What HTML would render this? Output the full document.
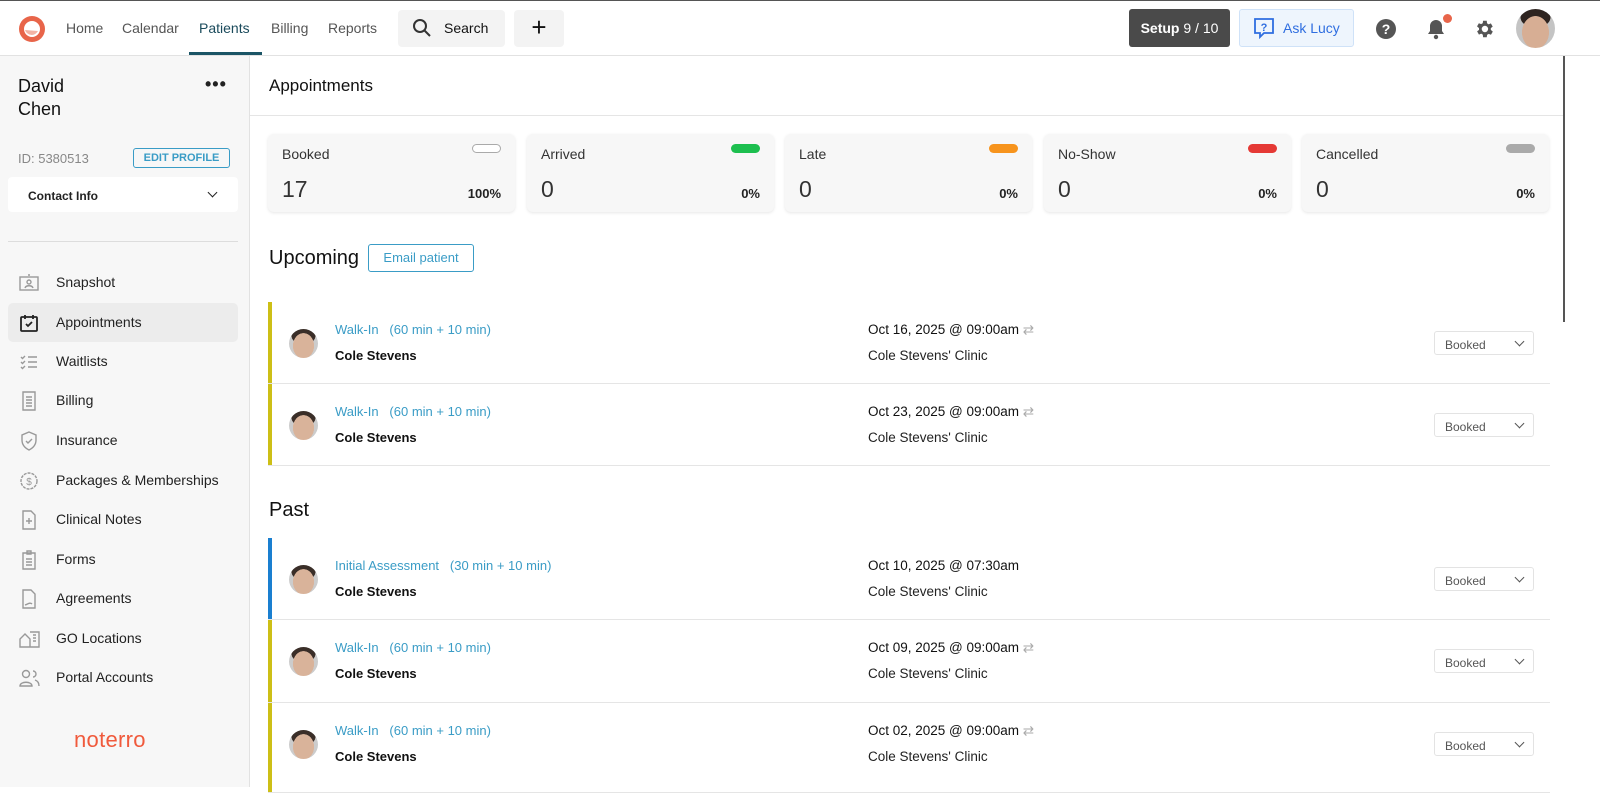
<!DOCTYPE html>
<html><head><meta charset="utf-8"><style>
*{box-sizing:border-box;margin:0;padding:0}
body{width:1600px;height:787px;overflow:hidden;font-family:"Liberation Sans",sans-serif;background:#fff;color:#222;position:relative}
.abs{position:absolute}
.top{position:absolute;left:0;top:0;width:1600px;height:56px;border-top:1px solid #555;border-bottom:1px solid #e2e2e2;background:#fff}
.nav{position:absolute;top:19px;font-size:14px;color:#555}
.side{position:absolute;left:0;top:56px;width:250px;height:731px;background:#f7f7f7;border-right:1px solid #e2e2e2}
.item{position:absolute;left:8px;width:230px;height:39px;font-size:14px;color:#222;line-height:39px;padding-left:48px;border-radius:5px}
.item svg{position:absolute;left:11px;top:10px}
.card{position:absolute;top:134px;width:247px;height:78px;background:#f7f7f7;border-radius:6px;box-shadow:0 1px 3px rgba(0,0,0,.1)}
.card .l{position:absolute;left:14px;top:12px;font-size:14px;color:#333}
.card .n{position:absolute;left:14px;top:42px;font-size:23px;color:#333}
.card .p{position:absolute;right:14px;top:52px;font-size:13px;font-weight:bold;color:#222}
.card .b{position:absolute;right:14px;top:10px;width:29px;height:9px;border-radius:5px}
.row{position:absolute;left:268px;width:1282px;border-bottom:1px solid #e5e5e5}
.row .bar{position:absolute;left:0;top:0;bottom:0;width:4px}
.row .av{position:absolute;left:21px;width:29px;height:29px;border-radius:50%;background:radial-gradient(ellipse 40% 48% at 50% 58%,#d9b39a 0 90%,transparent 92%),radial-gradient(ellipse 45% 30% at 50% 25%,#3a2e28 0 90%,transparent 92%),#ccc}
.row .t{position:absolute;left:67px;font-size:13px;color:#3a9cc6}
.row .nm{position:absolute;left:67px;font-size:13px;font-weight:bold;color:#111}
.row .d{position:absolute;left:600px;font-size:13.5px;color:#111}
.row .c{position:absolute;left:600px;font-size:13.5px;color:#222}
.row .dd{position:absolute;left:1166px;width:100px;height:24px;border:1px solid #e3e3e3;border-radius:3px;font-size:12px;color:#555;padding:6px 0 0 10px}
.dd:after{content:"";position:absolute;right:10px;top:6px;width:6px;height:6px;border-right:1.5px solid #555;border-bottom:1.5px solid #555;transform:rotate(45deg)}
</style></head><body>
<div class="top">
 <svg class="abs" style="left:17px;top:13px" width="30" height="30" viewBox="0 0 30 30"><circle cx="15" cy="15" r="13" fill="#e8654a"/><circle cx="15" cy="15" r="8" fill="#fff"/><path d="M8 16 A7 7 0 0 0 21 17 Z" fill="#f3b3a4"/></svg>
 <div class="nav" style="left:66px">Home</div>
 <div class="nav" style="left:122px">Calendar</div>
 <div class="nav" style="left:199px;color:#1b4b5c">Patients</div>
 <div class="abs" style="left:189px;top:51px;width:73px;height:3px;background:#1b5566"></div>
 <div class="nav" style="left:271px">Billing</div>
 <div class="nav" style="left:328px">Reports</div>
 <div class="abs" style="left:398px;top:9px;width:107px;height:37px;background:#f3f3f3;border-radius:4px"></div>
 <svg class="abs" style="left:412px;top:17px" width="20" height="20" viewBox="0 0 20 20"><circle cx="8" cy="8" r="6" fill="none" stroke="#333" stroke-width="2"/><path d="M12.5 12.5L18 18" stroke="#333" stroke-width="2"/></svg>
 <div class="nav" style="left:444px;color:#111">Search</div>
 <div class="abs" style="left:514px;top:9px;width:50px;height:37px;background:#f3f3f3;border-radius:4px;font-size:26px;text-align:center;line-height:35px;color:#111">+</div>
 <div class="abs" style="left:1129px;top:8px;width:101px;height:38px;background:#4a4a4a;border-radius:3px;color:#fff;font-size:14px;line-height:38px;text-align:center"><b>Setup</b> 9 / 10</div>
 <div class="abs" style="left:1239px;top:8px;width:115px;height:38px;background:#eef5fd;border:1px solid #cfe2f8;border-radius:3px;color:#2f6ee0;font-size:14px;line-height:36px;padding-left:43px">Ask Lucy</div>
 <svg class="abs" style="left:1253px;top:16px" width="22" height="22" viewBox="0 0 22 22"><path d="M2 2h18v14H11l-4 4v-4H2z" fill="none" stroke="#2f6ee0" stroke-width="1.8"/><text x="11" y="14" font-size="11" font-weight="bold" fill="#2f6ee0" text-anchor="middle" font-family="Liberation Sans">?</text></svg>
 <div class="abs" style="left:1376px;top:18px;width:20px;height:20px;border-radius:50%;background:#555;color:#fff;font-size:14px;font-weight:bold;text-align:center;line-height:20px">?</div>
 <svg class="abs" style="left:1425px;top:16px" width="22" height="24" viewBox="0 0 22 24"><path d="M3 17h16l-2-3v-5a6 6 0 0 0-12 0v5z" fill="#555"/><circle cx="11" cy="20" r="2.2" fill="#555"/></svg>
 <div class="abs" style="left:1443px;top:13px;width:9px;height:9px;border-radius:50%;background:#e8654a"></div>
 <svg class="abs" style="left:1473px;top:17px" width="22" height="22" viewBox="0 0 24 24"><path fill="#555" d="M19.4 13a7.5 7.5 0 0 0 0-2l2.1-1.6-2-3.5-2.5 1a7.6 7.6 0 0 0-1.7-1L15 3h-4l-.4 2.7a7.6 7.6 0 0 0-1.7 1l-2.5-1-2 3.5L6.6 11a7.5 7.5 0 0 0 0 2l-2.1 1.6 2 3.5 2.5-1a7.6 7.6 0 0 0 1.7 1L11 21h4l.4-2.7a7.6 7.6 0 0 0 1.7-1l2.5 1 2-3.5zM13 15.5a3.5 3.5 0 1 1 0-7 3.5 3.5 0 0 1 0 7z"/></svg>
 <div class="abs" style="left:1516px;top:8px;width:39px;height:39px;border-radius:50%;background:radial-gradient(ellipse 38% 46% at 50% 60%,#d7ae94 0 90%,transparent 92%),radial-gradient(ellipse 42% 28% at 50% 22%,#2e2420 0 90%,transparent 92%),#c4c4c4"></div>
</div>
<div class="abs" style="left:1563px;top:56px;width:2px;height:266px;background:#555"></div>

<div class="side">
 <div class="abs" style="left:18px;top:19px;font-size:18px;line-height:23px;color:#111">David<br>Chen</div>
 <div class="abs" style="left:205px;top:18px;font-size:18px;font-weight:bold;letter-spacing:1px">•••</div>
 <div class="abs" style="left:18px;top:95px;font-size:13px;color:#888">ID: 5380513</div>
 <div class="abs" style="left:133px;top:92px;width:97px;height:20px;border:1px solid #3a9cc6;border-radius:3px;font-size:11px;font-weight:bold;color:#3a9cc6;text-align:center;line-height:18px">EDIT PROFILE</div>
 <div class="abs" style="left:8px;top:121px;width:230px;height:35px;background:#fff;border-radius:4px;font-size:12px;font-weight:bold;padding:12px 0 0 20px">Contact Info</div>
 <div class="abs" style="left:209px;top:133px;width:7px;height:7px;border-right:1.6px solid #222;border-bottom:1.6px solid #222;transform:rotate(45deg)"></div>
 <div class="abs" style="left:8px;top:185px;width:230px;height:1px;background:#ddd"></div>
 <div class="item" style="top:207px"><svg width="20" height="20" viewBox="0 0 20 20" fill="none" stroke="#999" stroke-width="1.4"><rect x="1" y="4" width="18" height="13"/><circle cx="10" cy="9" r="2"/><path d="M6 15c1-3 7-3 8 0M9 2h2"/></svg>Snapshot</div>
 <div class="item" style="top:247px;background:#ececec"><svg width="20" height="20" viewBox="0 0 20 20" fill="none" stroke="#222" stroke-width="1.8"><rect x="2" y="4" width="16" height="14" rx="1"/><path d="M6 2v4M14 2v4M7 11l2 2 4-4"/></svg>Appointments</div>
 <div class="item" style="top:286px"><svg width="20" height="20" viewBox="0 0 20 20" fill="none" stroke="#999" stroke-width="1.4"><path d="M2 5l1.5 1.5L6 4M2 10l1.5 1.5L6 9M2 15l1.5 1.5L6 14M9 5h9M9 10h9M9 15h9"/></svg>Waitlists</div>
 <div class="item" style="top:325px"><svg width="20" height="20" viewBox="0 0 20 20" fill="none" stroke="#999" stroke-width="1.4"><path d="M4 1h12v18H4zM7 6h6M7 9h6M7 12h6M7 15h6"/></svg>Billing</div>
 <div class="item" style="top:365px"><svg width="20" height="20" viewBox="0 0 20 20" fill="none" stroke="#999" stroke-width="1.4"><path d="M10 1l7 3v5c0 5-3 8-7 10-4-2-7-5-7-10V4zM7 10l2 2 4-4"/></svg>Insurance</div>
 <div class="item" style="top:405px"><svg width="20" height="20" viewBox="0 0 20 20" fill="none" stroke="#999" stroke-width="1.4"><circle cx="10" cy="10" r="8" stroke-dasharray="3 1"/><text x="10" y="14" font-size="10" text-anchor="middle" fill="#999" stroke="none" font-family="Liberation Sans">$</text></svg>Packages &amp; Memberships</div>
 <div class="item" style="top:444px"><svg width="20" height="20" viewBox="0 0 20 20" fill="none" stroke="#999" stroke-width="1.4"><path d="M4 1h8l4 4v14H4zM10 8v6M7 11h6"/></svg>Clinical Notes</div>
 <div class="item" style="top:484px"><svg width="20" height="20" viewBox="0 0 20 20" fill="none" stroke="#999" stroke-width="1.4"><path d="M4 3h12v16H4zM8 1h4v3H8zM7 9h6M7 12h6M7 15h6"/></svg>Forms</div>
 <div class="item" style="top:523px"><svg width="20" height="20" viewBox="0 0 20 20" fill="none" stroke="#999" stroke-width="1.4"><path d="M4 1h8l4 4v14H4zM6 16c3-1 5-3 7-1"/></svg>Agreements</div>
 <div class="item" style="top:563px"><svg width="22" height="20" viewBox="0 0 22 20" fill="none" stroke="#999" stroke-width="1.4"><path d="M1 10l5-5 5 5v8H1zM11 3h9v15h-9M14 6h3M14 9h3M14 12h3"/></svg>GO Locations</div>
 <div class="item" style="top:602px"><svg width="22" height="20" viewBox="0 0 22 20" fill="none" stroke="#999" stroke-width="1.4"><circle cx="7" cy="6" r="3.5"/><path d="M1 18c0-5 12-5 12 0z"/><path d="M14 3a3 3 0 0 1 0 6M16 12c3 1 4 3 4 6"/></svg>Portal Accounts</div>
 <div class="abs" style="left:74px;top:671px;font-size:22px;color:#f05a3c;letter-spacing:0.3px">noterro</div>
</div>

<div class="abs" style="left:269px;top:76px;font-size:17px;color:#111">Appointments</div>
<div class="abs" style="left:250px;top:115px;width:1313px;height:1px;background:#e5e5e5"></div>

<div class="card" style="left:268px"><div class="l">Booked</div><div class="b" style="border:1px solid #aaa;background:#fff"></div><div class="n">17</div><div class="p">100%</div></div>
<div class="card" style="left:527px"><div class="l">Arrived</div><div class="b" style="background:#1dbf4f"></div><div class="n">0</div><div class="p">0%</div></div>
<div class="card" style="left:785px"><div class="l">Late</div><div class="b" style="background:#f7941d"></div><div class="n">0</div><div class="p">0%</div></div>
<div class="card" style="left:1044px"><div class="l">No-Show</div><div class="b" style="background:#e53935"></div><div class="n">0</div><div class="p">0%</div></div>
<div class="card" style="left:1302px"><div class="l">Cancelled</div><div class="b" style="background:#aaa"></div><div class="n">0</div><div class="p">0%</div></div>

<div class="abs" style="left:269px;top:247px;font-size:20px;color:#111">Upcoming</div>
<div class="abs" style="left:368px;top:244px;width:106px;height:28px;border:1px solid #3a9cc6;border-radius:3px;color:#3a9cc6;font-size:13px;text-align:center;line-height:26px">Email patient</div>
<div class="abs" style="left:269px;top:499px;font-size:20px;color:#111">Past</div>

<div class="row" style="top:302px;height:82px"><div class="bar" style="background:#cdbf16"></div><div class="av" style="top:27px"></div><div class="t" style="top:20px">Walk-In &nbsp;&nbsp;(60 min + 10 min)</div><div class="nm" style="top:46px">Cole Stevens</div><div class="d" style="top:20px">Oct 16, 2025 @ 09:00am <span style="color:#aaa">⇄</span></div><div class="c" style="top:46px">Cole Stevens' Clinic</div><div class="dd" style="top:29px">Booked</div></div>
<div class="row" style="top:384px;height:82px"><div class="bar" style="background:#cdbf16"></div><div class="av" style="top:27px"></div><div class="t" style="top:20px">Walk-In &nbsp;&nbsp;(60 min + 10 min)</div><div class="nm" style="top:46px">Cole Stevens</div><div class="d" style="top:20px">Oct 23, 2025 @ 09:00am <span style="color:#aaa">⇄</span></div><div class="c" style="top:46px">Cole Stevens' Clinic</div><div class="dd" style="top:29px">Booked</div></div>

<div class="row" style="top:538px;height:82px"><div class="bar" style="background:#1a7fd0"></div><div class="av" style="top:27px"></div><div class="t" style="top:20px">Initial Assessment &nbsp;&nbsp;(30 min + 10 min)</div><div class="nm" style="top:46px">Cole Stevens</div><div class="d" style="top:20px">Oct 10, 2025 @ 07:30am</div><div class="c" style="top:46px">Cole Stevens' Clinic</div><div class="dd" style="top:29px">Booked</div></div>
<div class="row" style="top:620px;height:83px"><div class="bar" style="background:#cdbf16"></div><div class="av" style="top:27px"></div><div class="t" style="top:20px">Walk-In &nbsp;&nbsp;(60 min + 10 min)</div><div class="nm" style="top:46px">Cole Stevens</div><div class="d" style="top:20px">Oct 09, 2025 @ 09:00am <span style="color:#aaa">⇄</span></div><div class="c" style="top:46px">Cole Stevens' Clinic</div><div class="dd" style="top:29px">Booked</div></div>
<div class="row" style="top:703px;height:90px"><div class="bar" style="background:#cdbf16"></div><div class="av" style="top:27px"></div><div class="t" style="top:20px">Walk-In &nbsp;&nbsp;(60 min + 10 min)</div><div class="nm" style="top:46px">Cole Stevens</div><div class="d" style="top:20px">Oct 02, 2025 @ 09:00am <span style="color:#aaa">⇄</span></div><div class="c" style="top:46px">Cole Stevens' Clinic</div><div class="dd" style="top:29px">Booked</div></div>
</body></html>
